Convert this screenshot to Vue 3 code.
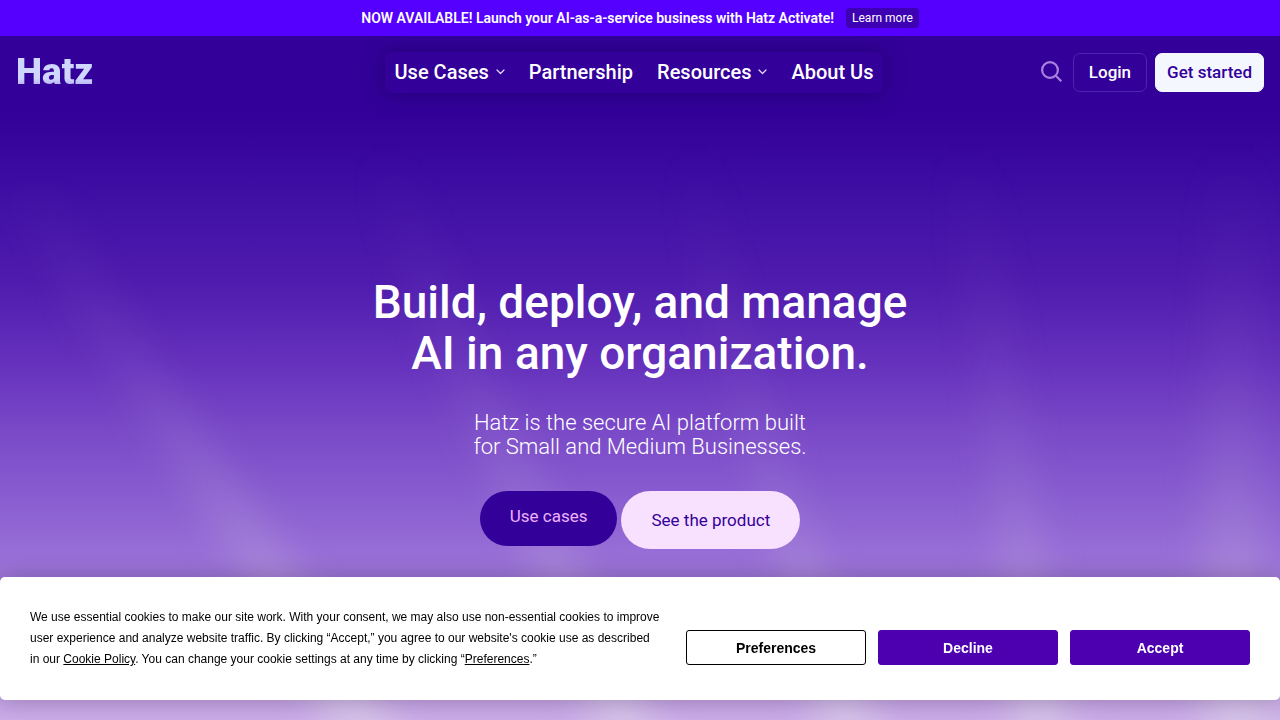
<script setup>
const navItems = [
  { label: 'Use Cases', menu: true },
  { label: 'Partnership', menu: false },
  { label: 'Resources', menu: true },
  { label: 'About Us', menu: false },
]
</script>

<template>
  <div class="page">
    <svg class="rays" viewBox="0 0 1280 684" preserveAspectRatio="none" aria-hidden="true">
      <defs>
        <linearGradient id="ray" x1="0" y1="0" x2="0" y2="684" gradientUnits="userSpaceOnUse">
          <stop offset="0.15" stop-color="#c3addb" stop-opacity="0" />
          <stop offset="0.5" stop-color="#c3addb" stop-opacity="0.08" />
          <stop offset="0.65" stop-color="#c3addb" stop-opacity="0.16" />
          <stop offset="0.8" stop-color="#c3addb" stop-opacity="0.34" />
          <stop offset="1" stop-color="#ded3ea" stop-opacity="0.65" />
        </linearGradient>
        <filter id="soft" x="-50%" y="-10%" width="200%" height="120%" color-interpolation-filters="sRGB">
          <feGaussianBlur stdDeviation="20 10" />
        </filter>
      </defs>
      <g fill="url(#ray)" filter="url(#soft)">
        <path d="M10 150 L60 150 C120 290 230 410 400 700 L335 700 C215 470 90 330 10 150Z" />
        <path d="M365 100 L400 100 C450 260 520 400 660 700 L600 700 C500 420 400 290 365 100Z" />
        <path d="M675 80 L710 80 C720 280 790 440 880 700 L820 700 C770 430 700 310 675 80Z" />
        <path d="M940 80 L980 80 C1010 280 1025 450 1070 700 L1015 700 C1000 430 975 280 940 80Z" />
        <path d="M1210 80 L1255 80 C1250 300 1260 460 1275 700 L1205 700 C1200 460 1210 300 1210 80Z" />
      </g>
    </svg>

    <div class="ribbon">
      <strong>NOW AVAILABLE! Launch your AI-as-a-service business with Hatz Activate!</strong>
      <a href="#activate" class="ribbon-link">Learn more</a>
    </div>

    <header class="header">
      <a href="#home" class="logo">Hatz</a>
      <nav class="nav" aria-label="Main">
        <a v-for="item in navItems" :key="item.label" href="#nav" class="nav-item">
          {{ item.label }}
          <svg v-if="item.menu" width="9" height="6" viewBox="0 0 9 6" aria-hidden="true">
            <path d="M1 1 L4.5 4.5 L8 1" fill="none" stroke="#e9dcff" stroke-width="1.2" stroke-linecap="round" stroke-linejoin="round" />
          </svg>
        </a>
      </nav>
      <div class="actions">
        <button class="search" type="button" aria-label="Search">
          <svg width="22" height="22" viewBox="0 0 22 22" aria-hidden="true">
            <circle cx="9" cy="9" r="7.9" fill="none" stroke="#a982e0" stroke-width="2.2" />
            <path d="M14.8 14.8 L20.3 20.3" stroke="#a982e0" stroke-width="2.2" />
          </svg>
        </button>
        <a href="#login" class="login">Login</a>
        <a href="#start" class="start">Get started</a>
      </div>
    </header>

    <main class="hero">
      <h1>Build, deploy, and manage<br />AI in any organization.</h1>
      <p>Hatz is the secure AI platform built<br />for Small and Medium Businesses.</p>
      <div class="cta">
        <a href="#use-cases" class="pill dark">Use cases</a>
        <a href="#product" class="pill light">See the product</a>
      </div>
    </main>

    <section class="cookies" aria-label="Cookie consent">
      <p>
        We use essential cookies to make our site work. With your consent, we may also use non-essential cookies to improve
        user experience and analyze website traffic. By clicking “Accept,” you agree to our website's cookie use as described
        in our <a href="#policy">Cookie Policy</a>. You can change your cookie settings at any time by clicking “<a href="#preferences">Preferences</a>.”
      </p>
      <div class="choices">
        <button type="button" class="outline">Preferences</button>
        <button type="button">Decline</button>
        <button type="button">Accept</button>
      </div>
    </section>
  </div>
</template>

<style>
body {
  margin: 0;
}
</style>

<style scoped>
.page {
  position: relative;
  min-height: 100vh;
  overflow: hidden;
  font-family: Roboto, "Liberation Sans", sans-serif;
  color: #fff;
  background: linear-gradient(180deg, #330099 0, #330099 16%, #4010a4 28%, #4f1bae 39%, #6430bc 50%, #7a4ac8 60%, #895dd0 69%, #9a70d8 78%, #b28ade 90%, #cbace9 100%);
}
.page a {
  color: inherit;
  text-decoration: none;
}
.rays {
  position: absolute;
  left: 0;
  top: 5%;
  width: 100%;
  height: 95%;
}
.ribbon {
  position: relative;
  display: flex;
  align-items: center;
  justify-content: center;
  gap: 12px;
  height: 36px;
  background: #5500ff;
  font-size: 14px;
}
.ribbon strong {
  font-weight: 600;
}
.ribbon-link {
  padding: 0 6px;
  border-radius: 4px;
  background: #3d00b3;
  font-size: 12px;
  line-height: 20px;
}
.header {
  position: relative;
  display: grid;
  grid-template-columns: 1fr auto 1fr;
  align-items: center;
  height: 72px;
  padding: 0 16px;
}
.logo {
  justify-self: start;
  font-size: 37px;
  line-height: 42px;
  font-weight: 900;
  background: linear-gradient(180deg, #cfd6ff 65%, #b9b4f5 80%);
  background-clip: text;
}
.page .logo {
  color: transparent;
}
.nav {
  display: flex;
  gap: 24px;
  height: 41px;
  margin-right: 12px;
  padding: 0 10px;
  border-radius: 8px;
  background: #330099;
  box-shadow: 0 0 20px rgba(20, 0, 80, 0.5);
}
.nav-item {
  display: flex;
  align-items: center;
  gap: 7px;
  font-size: 20px;
  line-height: 24px;
  font-weight: 500;
}
.actions {
  display: flex;
  align-items: center;
  justify-self: end;
  gap: 8px;
  font-size: 17px;
  font-weight: 500;
}
.search {
  display: flex;
  padding: 0;
  margin-right: 2px;
  border: 0;
  background: none;
}
.login,
.start {
  box-sizing: border-box;
  height: 39px;
  line-height: 37px;
  border: 1px solid #4f24b0;
  border-radius: 7px;
  padding: 0 15px;
}
.page .start {
  padding: 0 11px;
  border-color: #f5f7ff;
  background: #f5f7ff;
  color: #330099;
}
.hero {
  position: relative;
  display: flex;
  flex-direction: column;
  align-items: center;
  padding-top: 169px;
  text-align: center;
}
h1 {
  margin: 0;
  font-size: 46px;
  line-height: 51px;
  font-weight: 500;
}
.hero p {
  margin: 32px 0;
  font-size: 22px;
  line-height: 24px;
  font-weight: 350;
}
.cta {
  display: flex;
  align-items: flex-start;
  gap: 4px;
  font-size: 17px;
}
.pill {
  padding: 0 30px;
  border-radius: 29px;
}
.page .dark {
  padding-bottom: 4px;
  background: #330099;
  color: #efb2ff;
  line-height: 51px;
}
.page .light {
  background: #f8e0ff;
  color: #330099;
  line-height: 58px;
}
.cookies {
  position: fixed;
  left: 0;
  right: 0;
  bottom: 20px;
  display: flex;
  justify-content: space-between;
  gap: 24px;
  padding: 30px;
  border-radius: 5px;
  background: #fff;
  color: #000;
  box-shadow: 0 0 24px rgba(0, 0, 0, 0.24);
  font-family: "Liberation Sans", Arial, sans-serif;
}
.cookies p {
  flex: 1;
  margin: 0;
  font-size: 12px;
  line-height: 21px;
}
.cookies p a {
  text-decoration: underline;
}
.choices {
  display: flex;
  align-items: flex-end;
  gap: 12px;
  padding-bottom: 5px;
}
.choices button {
  width: 180px;
  height: 35px;
  border: 1px solid #4c00b0;
  border-radius: 3px;
  background: #4c00b0;
  color: #fff;
  font-family: inherit;
  font-size: 14px;
  font-weight: 700;
}
.choices .outline {
  border-color: #000;
  background: #fff;
  color: #000;
}
</style>
